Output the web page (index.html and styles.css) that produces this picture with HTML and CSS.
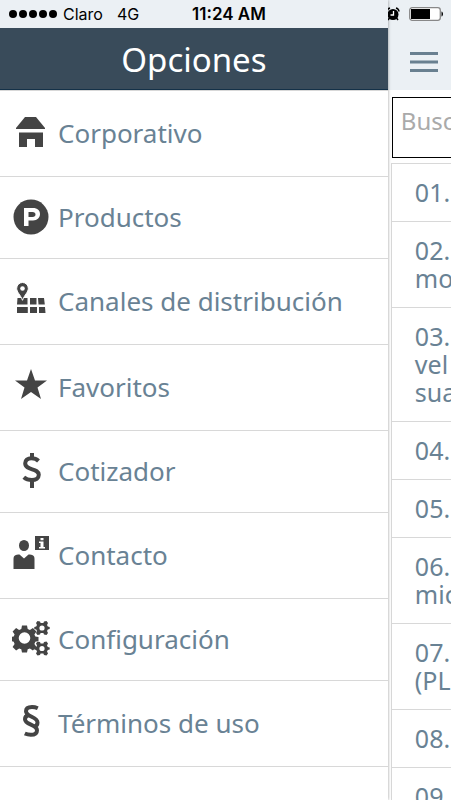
FILE: index.html
```html
<!DOCTYPE html>
<html lang="es">
<head>
<meta charset="utf-8">
<meta name="viewport" content="width=device-width, initial-scale=1">
<title>Opciones</title>
<link rel="stylesheet" href="styles.css">
</head>
<body>
<div class="app">
  <div class="drawer">
    <div class="status">
      <svg class="signal" width="48" height="8" viewBox="0 0 48 8" aria-hidden="true"><circle cx="4" cy="4" r="4"/><circle cx="14" cy="4" r="4"/><circle cx="24" cy="4" r="4"/><circle cx="34" cy="4" r="4"/><circle cx="44" cy="4" r="4"/></svg>
      <span class="carrier">Claro</span>
      <span class="network">4G</span>
      <span class="time">11:24 AM</span>
    </div>
    <header class="title-bar"><h1>Opciones</h1></header>
    <nav class="menu">
      <a class="item" href="#corporativo">
        <svg class="icon" viewBox="0 0 40 40"><path d="M13 4h11l9 11v1H4v-1z"/><path d="M7 19.500h24V34h-8v-8h-8v8H7z"/></svg>
        <span>Corporativo</span></a>
      <a class="item short" href="#productos">
        <svg class="icon" viewBox="0 0 40 40"><circle cx="19" cy="20" r="17.5"/><path class="cut" fill-rule="evenodd" d="M12 11h9c4.500 0 7 2.500 7 6s-2.500 6.500-7 6.500h-4.500V29H12zM16.500 15v5h4c2 0 3-1 3-2.500S22.500 15 20.500 15z"/></svg>
        <span>Productos</span></a>
      <a class="item" href="#canales">
        <svg class="icon" viewBox="0 0 40 40"><path d="M5.500 17H15.500v6.500H5zM18 17h6.500v6.500H18zM26 17h6l.8 6.500H26.500zM5 26h10.800v6H5zM18 26h7v6h-7zM27 26h6l.5 6H27z"/><path class="outline" d="M10.500 1.500a5.800 5.800 0 0 0-5.800 5.800c0 4 3.500 6 5.800 12 2.300-6 5.800-8 5.800-12a5.800 5.800 0 0 0-5.800-5.800z"/><circle class="cut" cx="10.500" cy="7.500" r="2.300"/></svg>
        <span>Canales de distribución</span></a>
      <a class="item" href="#favoritos">
        <svg class="icon" viewBox="0 0 40 40"><path d="M19 2l4 11.500h12L25.500 20.500 29 32l-10-7-10 7 3.500-11.500L3 13.500h12z"/></svg>
        <span>Favoritos</span></a>
      <a class="item short" href="#cotizador">
        <svg class="icon" viewBox="0 0 40 40"><path class="line" d="M26.500 10c-2-2-4.500-2.700-7-2.700-4 0-6.300 2-6.300 5 0 7.500 13.600 4.500 13.600 11.500 0 3.500-3 5.300-7 5.300-3 0-6-1-8-2.800"/><path d="M18 2h4v6h-4zM18 28h4v9h-4z"/></svg>
        <span>Cotizador</span></a>
      <a class="item" href="#contacto">
        <svg class="icon" viewBox="0 0 40 40"><ellipse cx="12" cy="10.500" rx="5" ry="5.500"/><path d="M1.500 34V24c0-3.500 2-4.500 6-4.500l4.500 4 4.500-4c4 0 6 1 6 4.500v10zM23 1h14v14H23z"/><path class="cut" d="M28.500 3h3v2.300h-3zM27 6.500h4.500V12H33v1.500h-6V12h1.500V8H27z"/></svg>
        <span>Contacto</span></a>
      <a class="item short" href="#configuracion">
        <svg class="icon" viewBox="0 0 40 40"><defs><path id="gear" fill-rule="evenodd" d="M-2.500-12.500h5l.7 3.500 2.200.9 3-2 3.500 3.500-2 3 .9 2.200 3.200.4v4l-3.200.7-.9 2.200 2 3-3.500 3.500-3-2-2.200.9-.7 3.200h-5l-.7-3.200-2.200-.9-3 2-3.500-3.500 2-3-.9-2.200-3.200-.7v-4l3.200-.4.9-2.200-2-3 3.500-3.500 3 2 2.200-.9zM0-5.800a5.800 5.800 0 1 0 0 11.600a5.800 5.800 0 1 0 0-11.600z"/><path id="cog" fill-rule="evenodd" d="M-4.500-7l2.500.5.6 1.500h2.800L2-6.500 4.500-7l1.500 2-1 2 .8 1.500L7.700-1v2l-1.900.5L5 3l1 2-1.500 2L2 6.500 1.400 5h-2.800L-2 6.500-4.500 7-6 5l1-2-.8-1.500L-7.700 1v-2l1.900-.5L-5-3l-1-2zM0-2.600a2.600 2.600 0 1 0 0 5.200a2.600 2.600 0 1 0 0-5.200z"/></defs><use href="#gear" x="12.500" y="19"/><use href="#cog" x="30" y="9"/><use href="#cog" x="30" y="29.500"/></svg>
        <span>Configuración</span></a>
      <a class="item" href="#terminos">
        <svg class="icon" viewBox="0 0 40 40"><path class="line" d="M25.800 5.300c-2-.9-4-1.300-5.800-1.300-3.800 0-6 1.600-6 4.300 0 6 11.500 5 11.500 11.200 0 2.200-1.200 3.600-3.500 4.300M16.500 12c-2.300.8-3.500 2.200-3.500 4.200 0 5.800 12 5 12 11 0 3-2.500 4.600-6.200 4.600-2 0-4-.4-6-1.300"/></svg>
        <span>Términos de uso</span></a>
    </nav>
  </div>
  <main class="page">
    <div class="status right">
      <svg width="14" height="14" viewBox="0 0 14 14" aria-hidden="true"><circle cx="7" cy="7.500" r="5.500"/><path d="M1 4.500A4 4 0 0 1 4 1M10 1a4 4 0 0 1 3 3.500M3.500 11l-1.500 2M10.500 11l1.500 2" fill="none" stroke="#000" stroke-width="1.500"/><path d="M7.500 4v4H4.500" fill="none" stroke="#fff" stroke-width="1.300"/></svg>
      <svg width="35" height="14" viewBox="0 0 35 14" aria-hidden="true"><rect x=".7" y=".7" width="30.600" height="12.600" rx="2.500" fill="#fff" stroke="#888" stroke-width="1.300"/><path d="M2 2h19v10H2zM32.500 4.500c2 .5 2 4.500 0 5z"/></svg>
    </div>
    <div class="top-bar">
      <button class="toggle" type="button" aria-label="Menú"><svg width="28" height="20" viewBox="0 0 28 20"><path d="M0 0h28v3H0zM0 8.500h28v3H0zM0 17h28v3H0z"/></svg></button>
    </div>
    <input class="search" type="text" placeholder="Busc" aria-label="Busc">
    <ul class="list">
      <li>01.</li>
      <li>02.<br>mo</li>
      <li>03.<br>vel<br>sua</li>
      <li>04.</li>
      <li>05.</li>
      <li>06.<br>mic</li>
      <li>07.<br>(PL</li>
      <li>08.</li>
      <li>09</li>
    </ul>
  </main>
</div>
</body>
</html>
```
FILE: styles.css
```css
* { box-sizing: border-box; }
body {
  margin: 0;
  background: #fff;
  color: #698294;
  font-family: "Noto Sans", "Open Sans", sans-serif;
}
.app {
  display: flex;
  height: 100vh;
  overflow: hidden;
}
.drawer {
  width: 86%;
  flex: none;
  background: #fff;
  box-shadow: 0 0 3px rgba(0, 0, 0, .4);
  z-index: 1;
}
.status {
  flex: none;
  display: flex;
  align-items: center;
  height: 28px;
  padding-left: 9px;
  background: #ebf0f4;
  color: #000;
  font: 16px Inter, sans-serif;
  white-space: nowrap;
}
.carrier { margin-left: 6px; }
.network { margin-left: 14px; }
.time {
  margin-left: auto;
  padding-right: 122px;
  font-size: 17px;
  font-weight: 600;
}
.status.right {
  justify-content: space-between;
  padding: 0 7px 0 0;
  margin-left: -2px;
}
.title-bar {
  height: 62px;
  display: flex;
  align-items: center;
  justify-content: center;
  padding-top: 2px;
  background: #394b5a;
  border-bottom: 1px solid #143148;
}
.title-bar h1 {
  margin: 0;
  color: #fff;
  font-size: 33px;
  font-weight: 400;
  line-height: 40px;
}
.menu { border-top: 1px solid #d8d8d8; }
.item {
  display: flex;
  align-items: center;
  gap: 6px;
  height: 86px;
  padding: 0 0 2px 12px;
  border-bottom: 1px solid #d8d8d8;
  color: inherit;
  font-size: 26px;
  line-height: 36px;
  text-decoration: none;
  white-space: nowrap;
}
.item.short { height: 82px; }
.icon { width: 40px; height: 40px; flex: none; fill: #444; }
.icon .cut { fill: #fff; }
.icon .outline { stroke: #fff; stroke-width: 1; }
.icon .line { fill: none; stroke: #444; stroke-width: 4; }
.page {
  flex: 1;
  min-width: 0;
  display: flex;
  flex-direction: column;
}
.top-bar {
  flex: none;
  display: flex;
  align-items: center;
  height: 62px;
  padding-left: 22px;
  background: #ebf0f4;
}
.toggle {
  display: flex;
  padding: 6px 0 0;
  border: 0;
  background: none;
  fill: #698090;
}
.search {
  flex: none;
  min-width: 0;
  height: 61px;
  margin: 7px 0 5px 4px;
  padding: 0 0 14px 8px;
  border: 1px solid #000;
  border-right: 0;
  border-radius: 0;
  background: #fff;
  font: 24px "Noto Sans", sans-serif;
}
.search::placeholder { color: #aaa; }
.list {
  margin: 0 0 0 3px;
  padding: 0;
  list-style: none;
  border: solid #d8d8d8;
  border-width: 1px 0 0 1px;
  font-size: 25px;
  line-height: 28px;
}
.list li {
  padding: 14px 0 15px 23px;
  border-bottom: 1px solid #d8d8d8;
  white-space: nowrap;
}
```
